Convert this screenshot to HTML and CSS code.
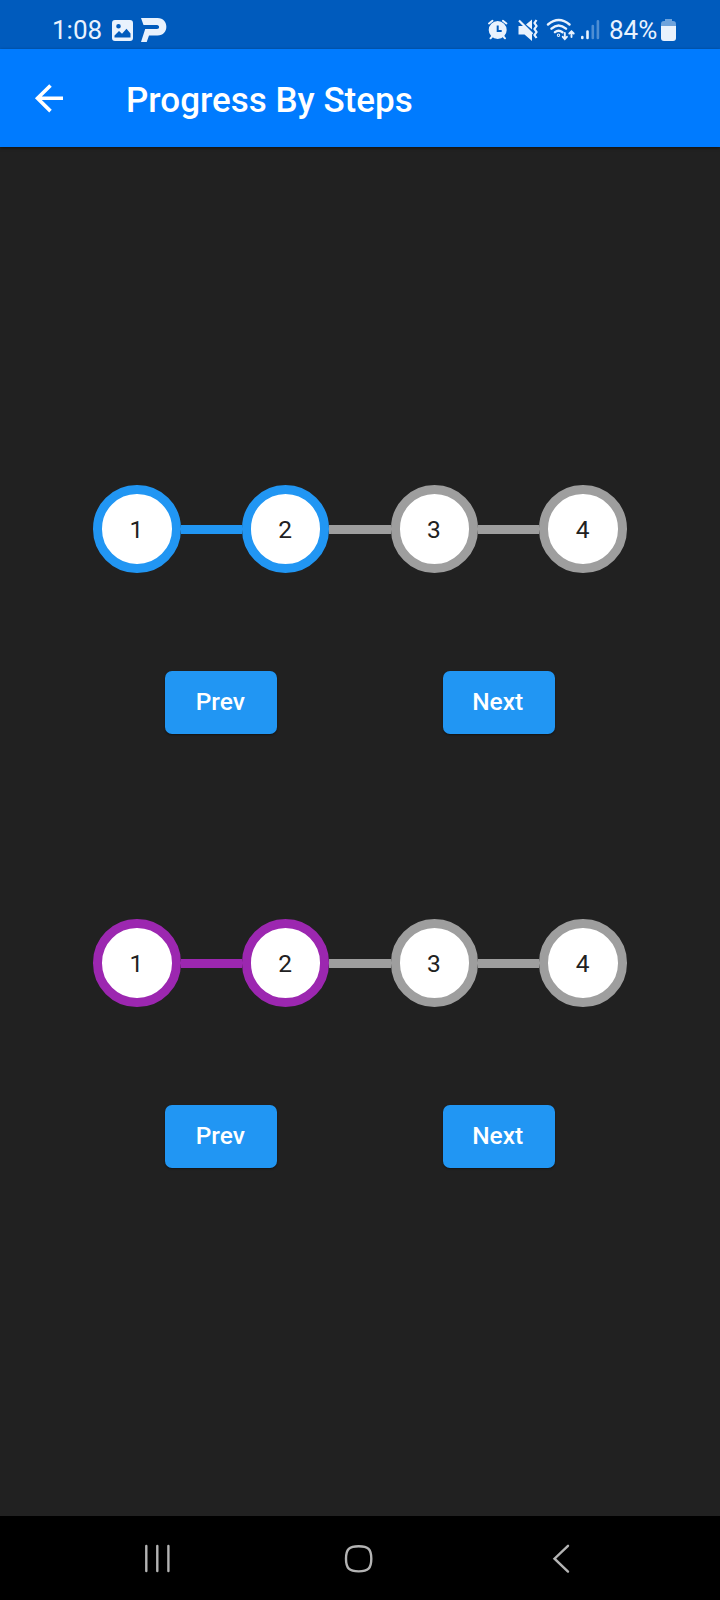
FILE: index.html
```html
<!DOCTYPE html>
<html lang="en">
<head>
<meta charset="utf-8">
<title>Progress By Steps</title>
<link rel="stylesheet" href="styles.css">
</head>
<body>
<div class="screen">
  <header class="status">
    <span class="clock">1:08</span>
    <svg class="status-notes" width="58" height="28" viewBox="110 16 58 28">
      <path fill="#e9f2fd" fill-rule="evenodd" d="M115 20h15q3 0 3 3v15q0 3-3 3h-15q-3 0-3-3V23q0-3 3-3ZM118.500 24a2.300 2.300 0 1 0 0 4.600a2.300 2.300 0 1 0 0-4.600ZM114.500 37.500h16v-4l-4-4.700-4.500 5-3-2.800-4.500 4.500Z"/>
      <path fill="#e9f2fd" d="M141 18h16.500c11.800 0 11.800 17.500 0 17.500H149l-2.300 6.500H141l4.200-13H157c2.800 0 2.800-4 0-4H143.500Z"/>
    </svg>
    <svg class="status-icons" width="116" height="26" viewBox="486 17 116 26">
      <g fill="none" stroke="#e9f2fd" stroke-width="2" stroke-linecap="round">
        <circle cx="497.700" cy="30" r="8" fill="#e9f2fd"/>
        <path d="M489 23.500l3.500-2.700M506.400 23.500l-3.500-2.700M492.500 36l-2 2.300M503 36l2 2.300"/>
        <path d="M497.700 25.500V31h4" stroke="#005bbd" stroke-linecap="butt"/>
      </g>
      <path fill="#e9f2fd" d="M518.500 26h6.500l7 7V41l-7.500-6.500h-6ZM526 24.500l6-5v10Z"/>
      <path d="M519 20.500l13.500 13.500" stroke="#e9f2fd" stroke-width="2.200" fill="none"/>
      <path d="M536.500 20l-2 3 2 3-2 3 2 3-2 3 2 3" fill="none" stroke="#e9f2fd" stroke-width="2.200"/>
      <g fill="none" stroke="#e9f2fd" stroke-width="2.400" stroke-linecap="round">
        <path d="M548 24.500q10.700-9 21.500 0M551.500 28.700q7-6.500 14.500 0M555 32.200q3.500-3 7.500 0"/>
        <circle cx="558.500" cy="35.200" r=".5"/>
        <path d="M564.800 33v5.500M562.700 36.800l2.100 2.200 2.100-2.200M571.500 37v-5.500M569.300 33.500l2.200-2.200 2.200 2.200" stroke-width="1.900"/>
      </g>
      <g stroke-width="2.600" stroke-linecap="round">
        <path d="M582.300 37v1M587.500 31.500V38" stroke="#e9f2fd"/>
        <path d="M592.800 26V38M597.900 21.300V38" stroke="#4e8ed3"/>
      </g>
    </svg>
    <span class="percent">84%</span>
    <svg class="battery" width="16" height="24" viewBox="660 18 16 24">
      <path fill="#6ea3dc" d="M665 19h7v2h1q3 0 3 3v4h-15v-4q0-3 3-3h1Z"/>
      <path fill="#e9f2fd" d="M661 26h15v12q0 3-3 3h-9q-3 0-3-3Z"/>
    </svg>
  </header>
  <div class="appbar">
    <svg class="back" width="32" height="32" viewBox="33 82 32 32" fill="none" stroke="#fff" stroke-width="3.600">
      <path d="M63 98.300H37M50.500 85.500L37.500 98.300 50.500 111.100"/>
    </svg>
    <h1 class="title">Progress By Steps</h1>
  </div>
  <main class="content">
    <section class="group blue">
      <div class="steps">
        <div class="step done">1</div><div class="line done"></div>
        <div class="step done">2</div><div class="line"></div>
        <div class="step">3</div><div class="line"></div>
        <div class="step">4</div>
      </div>
      <div class="actions"><button class="btn">Prev</button><button class="btn">Next</button></div>
    </section>
    <section class="group purple">
      <div class="steps">
        <div class="step done">1</div><div class="line done"></div>
        <div class="step done">2</div><div class="line"></div>
        <div class="step">3</div><div class="line"></div>
        <div class="step">4</div>
      </div>
      <div class="actions"><button class="btn">Prev</button><button class="btn">Next</button></div>
    </section>
  </main>
  <nav class="navbar">
    <svg width="720" height="84" viewBox="0 1516 720 84" fill="none" stroke="#b4b4b4" stroke-width="2.400" stroke-linecap="round">
      <path d="M146.300 1546v25M157.300 1546v25M168.400 1546v25"/>
      <path d="M358.700 1546.200c9.500 0 12.600 3 12.600 12.600s-3.100 12.600-12.600 12.600-12.700-3-12.700-12.600 3.200-12.600 12.700-12.600Z"/>
      <path d="M568 1545.800l-13.500 12.900 13.500 12.900"/>
    </svg>
  </nav>
</div>
</body>
</html>
```
FILE: styles.css
```css
* { box-sizing: border-box; }
body { margin: 0; font-family: Roboto, "Liberation Sans", sans-serif; }
.screen { width: 720px; height: 1600px; display: flex; flex-direction: column; background: #212121; }
.status { height: 49px; flex: none; display: flex; align-items: flex-start; background: #005bbd; color: #e9f2fd; font-size: 26px; line-height: 30px; padding-left: 52px; }
.clock, .percent { margin-top: 15px; }
.clock { width: 58px; }
.status-notes { margin-top: 16px; }
.status-icons { margin: 17px 0 0 318px; }
.percent { margin-left: 7px; width: 51px; }
.battery { margin-top: 18px; }
.appbar { height: 98px; flex: none; display: flex; align-items: center; padding: 0 0 0 33px; background: #007bff; box-shadow: 0 1px 3px rgba(0, 0, 0, .5); }
.title { margin: 5px 0 0 61px; color: #fff; font-size: 35px; line-height: 42px; font-weight: 500; }
.content { flex: 1; display: flex; flex-direction: column; gap: 185px; padding-top: 338px; }
.steps { height: 88px; display: flex; align-items: center; justify-content: center; }
.step { width: 87.5px; height: 87.5px; flex: none; display: flex; align-items: center; justify-content: center; padding-right: 1px; border: 9px solid #9e9e9e; border-radius: 50%; background: #fff; color: #212121; font-size: 24.5px; }
.line { width: 61.25px; height: 9px; background: #9e9e9e; }
.blue .done { border-color: #2196f3; }
.blue .line.done { background: #2196f3; }
.purple .done { border-color: #9c27b0; }
.purple .line.done { background: #9c27b0; }
.actions { margin-top: 98px; display: flex; justify-content: space-evenly; }
.btn { width: 112px; height: 62.5px; padding: 0 2px 1px 0; border: 0; border-radius: 7px; background: #2196f3; color: #fff; font: 500 24.5px/30px Roboto, "Liberation Sans", sans-serif; box-shadow: 0 1px 2px rgba(0, 0, 0, .45); }
.group { height: 249px; }
.navbar { height: 84px; flex: none; background: #000; }
.navbar svg { display: block; }
```
